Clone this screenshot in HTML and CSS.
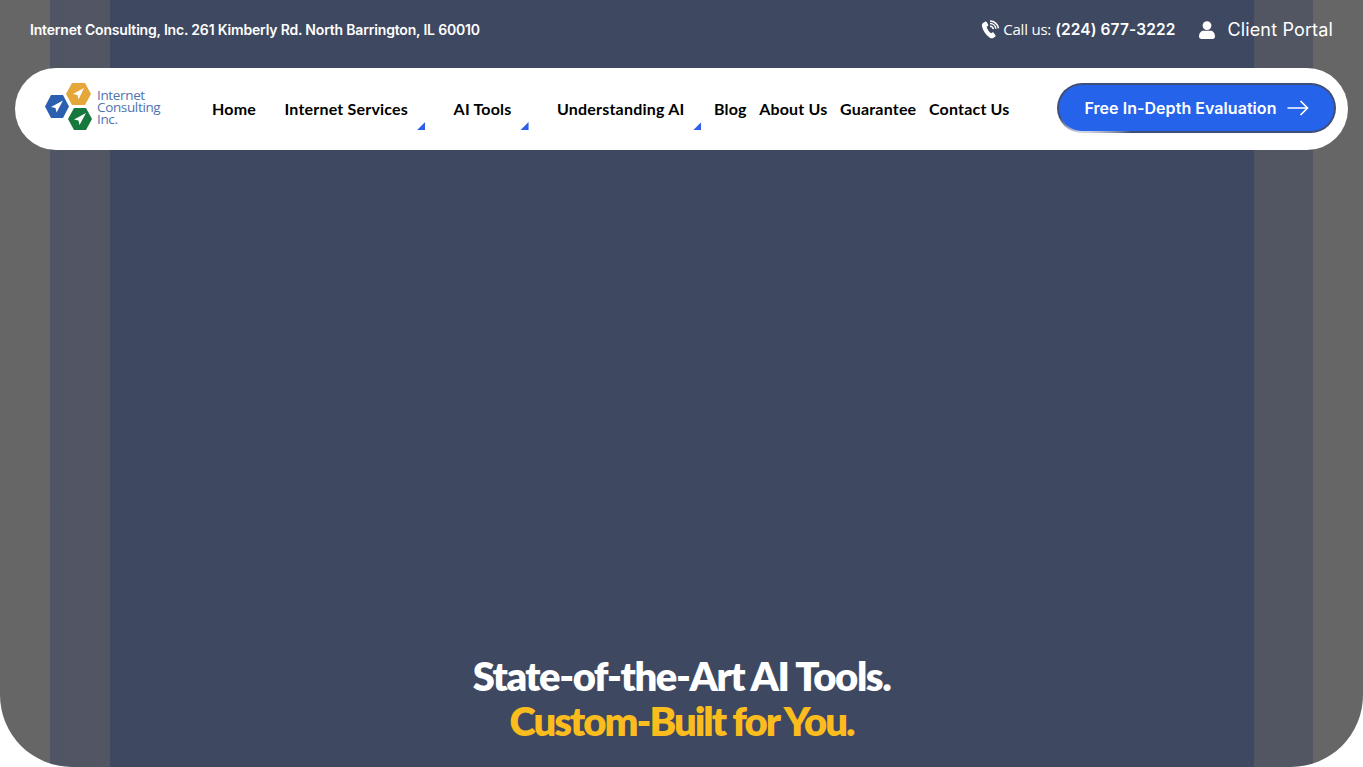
FILE: index.html
```html
<!DOCTYPE html>
<html lang="en">
<head>
  <meta charset="UTF-8" />
  <title>Internet Consulting, Inc.</title>
  <link rel="stylesheet" href="styles.css">
</head>
<body>
  <div class="hero">
    <div class="topbar">
      <div class="address">Internet Consulting, Inc. 261 Kimberly Rd. North Barrington, IL 60010</div>
      <div class="contact">
        <a class="call" href="#">
          <svg class="phone-icon" viewBox="0 0 20 20" width="19" height="19">
            <path d="M2.2 3.2 L4.6 1.6 C5.2 1.3 5.7 1.5 6 2 L7.6 4.9 C7.9 5.5 7.7 6 7.2 6.3 L5.9 7.2 C6.5 9.8 8.4 12.6 10.6 14 L11.9 13.1 C12.4 12.8 13 12.9 13.3 13.4 L15.2 16 C15.5 16.5 15.4 17.1 14.9 17.5 L12.8 19 C11.8 19.6 10.4 19.4 9 18.4 C5 15.6 2 11.2 1 6.6 C.7 5.2 1.2 3.9 2.2 3.2 Z" fill="#fff"/>
            <path d="M9.5 6.6 A3.6 3.6 0 0 1 13 9.6 M9.5 3.8 A6.2 6.2 0 0 1 15.7 9.2 M9.5 1 A9 9 0 0 1 18.4 8.8" fill="none" stroke="#fff" stroke-width="1.6"/>
          </svg>
          <span class="call-label">Call us:</span>
          <span class="call-number">(224) 677-3222</span>
        </a>
        <a class="portal" href="#">
          <svg class="user-icon" viewBox="0 0 16 18" width="16" height="18">
            <circle cx="8" cy="4.6" r="4.4" fill="#fff"/>
            <path d="M0 15.5 C0 11.8 2.4 9.8 4.6 9.8 L11.4 9.8 C13.6 9.8 16 11.8 16 15.5 C16 17 15 18 13.6 18 L2.4 18 C1 18 0 17 0 15.5 Z" fill="#fff"/>
          </svg>
          <span>Client Portal</span>
        </a>
      </div>
    </div>

    <header class="navbar">
      <a class="logo" href="#">
        <svg class="logo-mark" viewBox="0 0 48 48" width="48" height="48">
          <polygon points="21,11 27,0 40,0 46,11 40,22 27,22" fill="#e5a63a"/>
          <polygon points="0,23.500 6,12 18,12 24,23.500 18,35 6,35" fill="#2b5fb0"/>
          <polygon points="23,36 29,25 41,25 47,36 41,47 29,47" fill="#16783c"/>
          <path d="M39 5 L28 11 L32.500 12 L33.500 16.500 Z" fill="#fff"/>
          <path d="M18 17.500 L6 24 L10.500 25 L11.500 29.500 Z" fill="#fff"/>
          <path d="M41 30 L29 36.500 L33.500 37.500 L34.500 42 Z" fill="#fff"/>
        </svg>
        <span class="logo-text">Internet<br>Consulting<br>Inc.</span>
      </a>
      <nav class="menu">
        <a class="menu-item" href="#">Home</a>
        <a class="menu-item has-sub" href="#">Internet Services</a>
        <a class="menu-item has-sub" href="#">AI Tools</a>
        <a class="menu-item has-sub" href="#">Understanding AI</a>
        <a class="menu-item" href="#">Blog</a>
        <a class="menu-item" href="#">About Us</a>
        <a class="menu-item" href="#">Guarantee</a>
        <a class="menu-item" href="#">Contact Us</a>
      </nav>
      <a class="cta" href="#">
        <span>Free In-Depth Evaluation</span>
        <svg class="cta-arrow" viewBox="0 0 22 16" width="22" height="16">
          <path d="M0.500 8 H20 M13.500 1 L20.500 8 L13.500 15" fill="none" stroke="#fff" stroke-width="1.700"/>
        </svg>
      </a>
    </header>

    <h1 class="headline">
      State-of-the-Art AI Tools.
      <span class="headline-accent">Custom-Built for You.</span>
    </h1>
  </div>
</body>
</html>
```

FILE: styles.css
```css
* {
  box-sizing: border-box;
  margin: 0; padding: 0;
}
html, body {
  height: 100%;
  background: #fff;
}
body {
  overflow: hidden;
  font-family: Inter, Arial, sans-serif;
}
a {
  color: inherit;
  text-decoration: none;
}
.hero {
  display: flex;
  flex-direction: column;
  height: 767px;
  color: #fff;
  border-radius: 0 0 72px 72px;
  overflow: hidden;
  background: linear-gradient(to right,
    #666666 0, #666666 50px,
    #505565 50px, #525662 110px,
    #3e4860 110px, #3e4860 1254px,
    #525662 1254px, #525662 1313px,
    #666666 1313px, #666666 100%);
}
.topbar {
  display: flex;
  justify-content: space-between;
  align-items: center;
  height: 68px;
  padding: 0 30px 9px;
}
.address {
  font-size: 14px;
  font-weight: 600;
  letter-spacing: -0.18px;
}
.contact {
  display: flex;
  align-items: center;
  gap: 24px;
}
.call {
  display: flex;
  align-items: center;
}
.phone-icon {
  margin-right: 3px;
}
.call-label {
  font-family: "Open Sans", Arial, sans-serif;
  font-size: 15px;
  letter-spacing: -0.2px;
  margin: -2px 4px 0 0;
}
.call-number {
  font-size: 15.500px;
  font-weight: 600;
  letter-spacing: 0.1px;
}
.portal {
  display: flex;
  align-items: center;
  gap: 12px;
  font-size: 18px;
  letter-spacing: 0.15px;
}
.navbar {
  display: flex;
  align-items: center;
  height: 82px;
  margin: 0 15px;
  padding: 0 12px 0 30px;
  background: #fff;
  border-radius: 41px;
  color: #000;
}
.logo {
  display: flex;
  align-items: center;
  gap: 4px;
  width: 167px;
  margin-top: -5px;
}
.logo-text {
  font-family: "Open Sans", Arial, sans-serif;
  font-size: 13.500px;
  line-height: 12px;
  letter-spacing: -0.35px;
  color: #4f74ad;
}
.menu {
  display: flex;
  align-items: center;
  gap: 12.500px;
}
.menu-item {
  position: relative;
  font-family: Lato, Arial, sans-serif;
  font-size: 16px;
  font-weight: 700;
  letter-spacing: 0.2px;
  line-height: 82px;
  white-space: nowrap;
}
.menu-item.has-sub {
  margin-left: 16px;
  padding-right: 17px;
}
.menu-item.has-sub::after {
  content: "";
  position: absolute;
  right: 0;
  bottom: 20px;
  width: 8px;
  height: 8px;
  background: #2f5fe8;
  clip-path: polygon(100% 0, 100% 100%, 0 100%);
}
.cta {
  display: flex;
  align-items: center;
  gap: 10px;
  height: 50px;
  margin-left: auto;
  margin-top: -2px;
  padding: 0 25.500px;
  border: 2px solid transparent;
  border-radius: 25px;
  font-size: 16px;
  font-weight: 600;
  letter-spacing: 0.05px;
  color: #fff;
  white-space: nowrap;
  background:
    linear-gradient(#2563eb, #2563eb) padding-box,
    conic-gradient(from 250deg, #3f4f7a 0deg, #d5dae6 8deg, #3f4f7a 16deg, #3f4f7a 360deg) border-box;
}
.headline {
  margin-top: auto;
  padding-bottom: 23px;
  font-family: Lato, Arial, sans-serif;
  font-size: 40px;
  font-weight: 800;
  line-height: 45px;
  letter-spacing: -1.450px;
  text-align: center;
}
.headline-accent {
  display: block;
  color: #fbbc1d;
  letter-spacing: -2px;
}
```
